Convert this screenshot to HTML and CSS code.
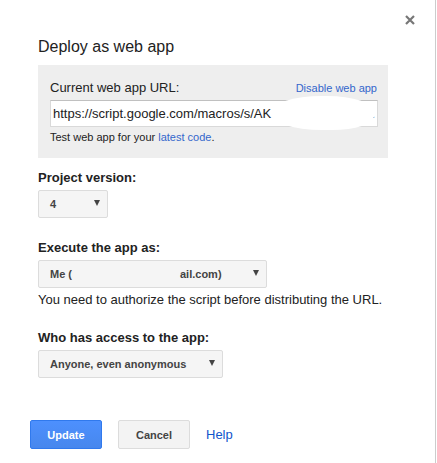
FILE: index.html
```html
<!DOCTYPE html>
<html>
<head>
    <title>Deploy as web app</title>
    <meta charset="UTF-8">
    <link rel="stylesheet" href="styles.css">
</head>
<body>
<div class="dialog">
    <svg class="close" viewBox="0 0 10 10">
        <path d="M1 1L9 9M9 1L1 9"></path>
    </svg>
    <h2 class="dialog__title">Deploy as web app</h2>

    <div class="url-box">
        <div class="url-box__head">
            <span>Current web app URL:</span>
            <a href="#">Disable web app</a>
        </div>
        <div class="url-box__field">
            <div class="url-input">https://script.google.com/macros/s/AK<span class="url-input__tail">.</span></div>
            <div class="blot"></div>
        </div>
        <div class="url-box__test">Test web app for your <a href="#">latest code</a>.</div>
    </div>

    <div class="field">
        <div class="field__label">Project version:</div>
        <div class="select select--version">4</div>
    </div>

    <div class="field field--spaced">
        <div class="field__label">Execute the app as:</div>
        <div class="select select--user">Me (<span class="hidden-mail"></span>ail.com)</div>
        <div class="field__note">You need to authorize the script before distributing the URL.</div>
    </div>

    <div class="field field--spaced">
        <div class="field__label">Who has access to the app:</div>
        <div class="select select--access">Anyone, even anonymous</div>
    </div>

    <div class="buttons">
        <button class="btn btn--action">Update</button>
        <button class="btn">Cancel</button>
        <a class="help" href="#">Help</a>
    </div>
</div>
</body>
</html>
```
FILE: styles.css
```css
body {
    margin: 0;
    background-color: #fff;
    color: #222;
    font-family: "Liberation Sans", Arial, sans-serif;
}

a {
    color: #36c;
    text-decoration: none;
}

.dialog {
    position: relative;
    width: 397px;
    height: 463px;
    padding: 0 0 0 38px;
    border-right: 1px solid #ccc;
    box-sizing: content-box;
}

.close {
    position: absolute;
    top: 15px;
    left: 405px;
    width: 10px;
    height: 10px;
    stroke: #777;
    stroke-width: 2.2;
    fill: none;
}

.dialog__title {
    margin: 0;
    padding-top: 35px;
    font-size: 16px;
    font-weight: normal;
    line-height: 24px;
    height: 30px;
}

.url-box {
    width: 350px;
    box-sizing: border-box;
    padding: 15px 10px 14px 12px;
    background-color: #eee;
}

.url-box__head {
    display: flex;
    justify-content: space-between;
    align-items: center;
    font-size: 13px;
    line-height: 16px;
}

.url-box__head a {
    font-size: 11px;
    padding-right: 1px;
}

.url-box__field {
    position: relative;
    margin-top: 4px;
}

.url-input {
    height: 27px;
    box-sizing: border-box;
    border: 1px solid #d9d9d9;
    border-top-color: #c0c0c0;
    background-color: #fff;
    padding: 0 2px;
    font-size: 13px;
    line-height: 25px;
    white-space: nowrap;
    overflow: hidden;
    display: flex;
}

.url-input__tail {
    margin-left: auto;
}

/* white smudge over the end of the address */
.blot {
    position: absolute;
    left: 220px;
    top: -4px;
    width: 104px;
    height: 34px;
    background-color: #fff;
    border-radius: 50% 45% 40% 50%;
}

.url-box__test {
    margin-top: 3px;
    font-size: 11px;
    line-height: 14px;
}

.field {
    margin-top: 12px;
}

.field--spaced {
    margin-top: 22px;
}

.field__label {
    font-size: 13px;
    font-weight: bold;
    line-height: 16px;
}

.field__note {
    margin-top: 4px;
    font-size: 13px;
    line-height: 16px;
}

.select {
    position: relative;
    margin-top: 4px;
    height: 28px;
    box-sizing: border-box;
    padding: 0 0 0 11px;
    border: 1px solid #dcdcdc;
    border-radius: 2px;
    background-color: #f5f5f5;
    color: #444;
    font-size: 11px;
    font-weight: bold;
    line-height: 26px;
    white-space: nowrap;
}

.select::after {
    content: "";
    position: absolute;
    right: 7px;
    top: 9px;
    border-left: 3.5px solid transparent;
    border-right: 3.5px solid transparent;
    border-top: 6px solid #444;
}

.select--version {
    width: 70px;
}

.select--user {
    width: 229px;
}

.select--access {
    width: 185px;
}

.hidden-mail {
    display: inline-block;
    width: 108px;
}

.buttons {
    display: flex;
    align-items: center;
    margin: 42px 0 0 -8px;
}

.btn {
    width: 72px;
    height: 29px;
    margin-right: 16px;
    border: 1px solid #dcdcdc;
    border-radius: 2px;
    background-color: #f3f3f3;
    color: #444;
    font-family: inherit;
    font-size: 11px;
    font-weight: bold;
    padding: 0;
}

.btn--action {
    border-color: #3079ed;
    background: linear-gradient(#4d90fe, #4787ed);
    color: #fff;
}

.help {
    font-size: 13px;
    color: #15c;
}
```
